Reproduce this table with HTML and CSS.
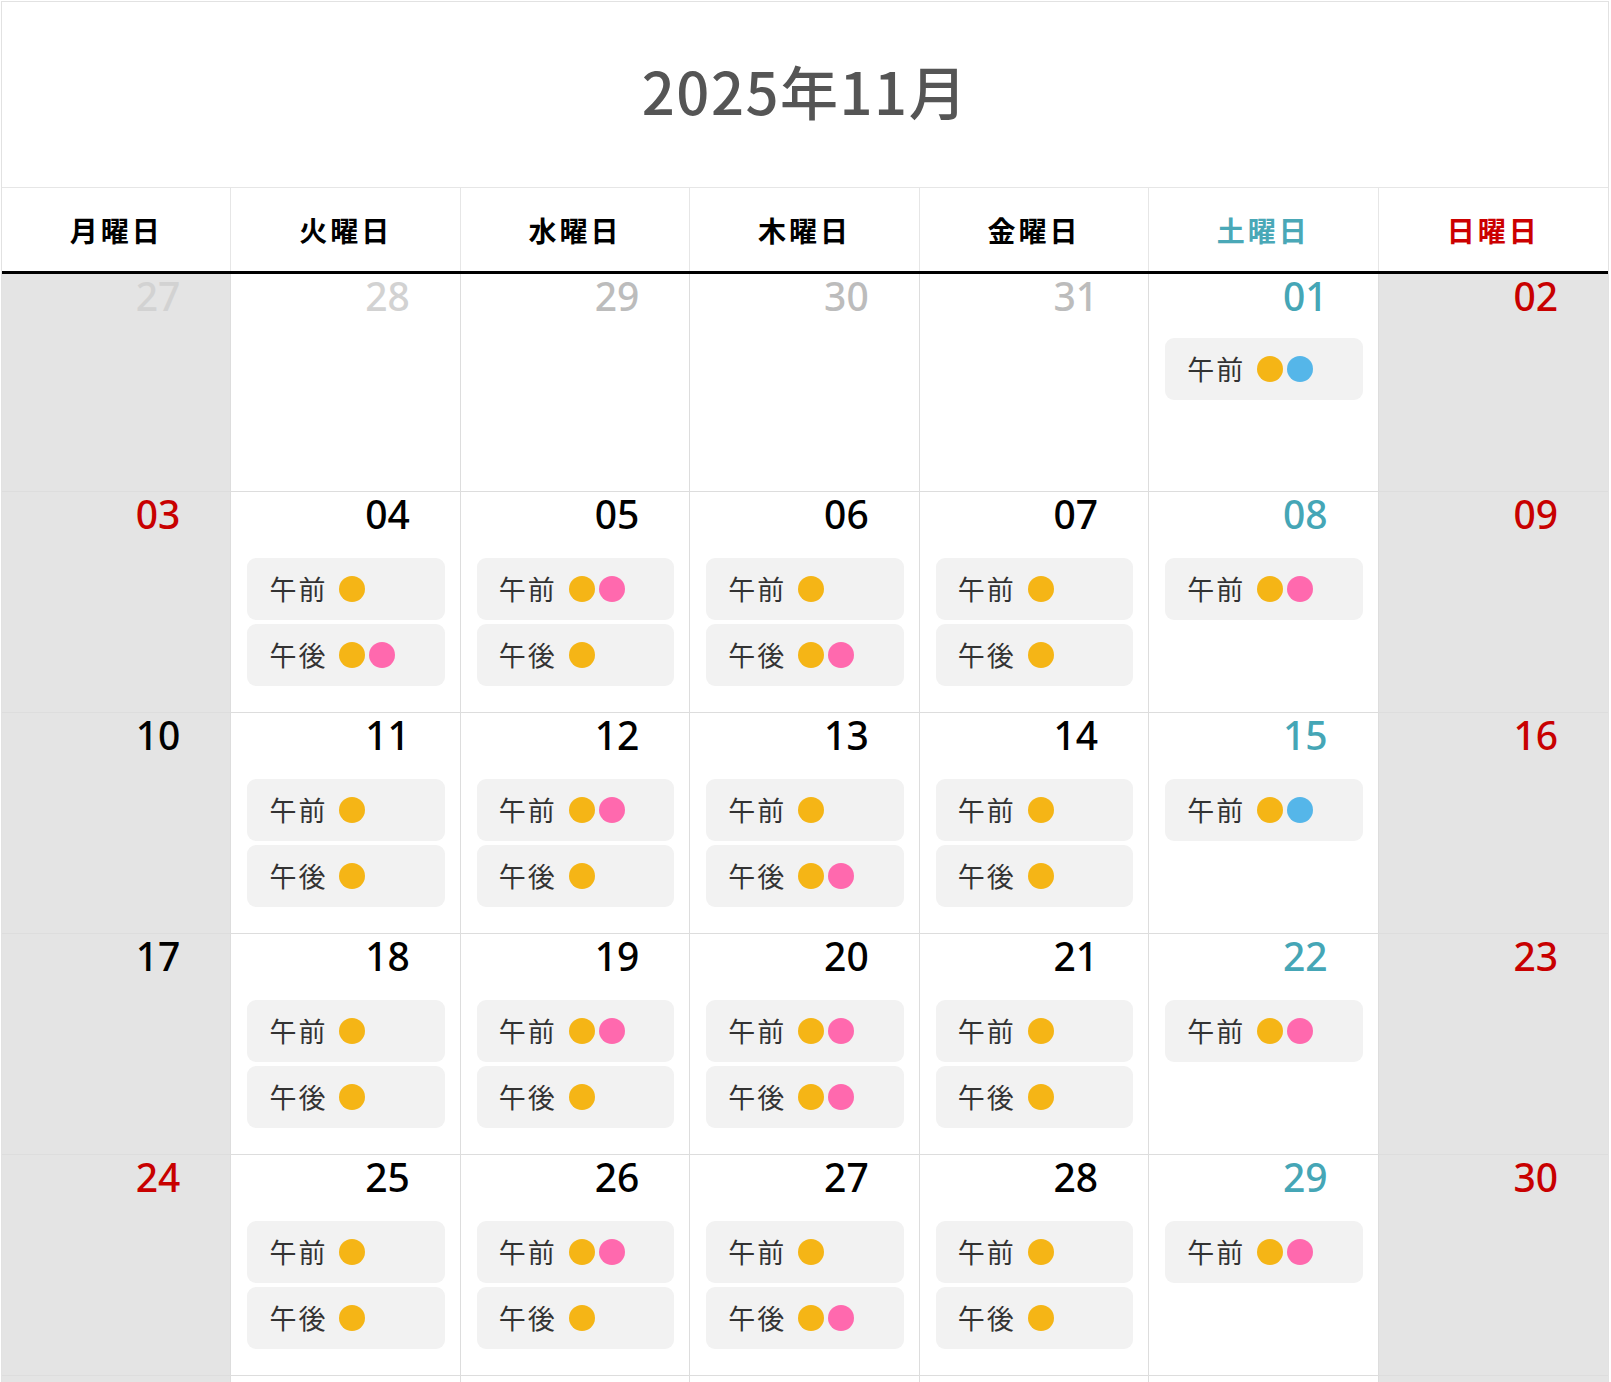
FILE: index.html
```html
<!DOCTYPE html>
<html lang="ja">
<head>
<meta charset="utf-8">
<title>2025年11月</title>
<link rel="stylesheet" href="styles.css">
</head>
<body>
<div class="calendar">
  <div class="title">2025年11月</div>
  <div class="weekdays">
    <div class="wd">月曜日</div>
    <div class="wd">火曜日</div>
    <div class="wd">水曜日</div>
    <div class="wd">木曜日</div>
    <div class="wd">金曜日</div>
    <div class="wd sat">土曜日</div>
    <div class="wd sun">日曜日</div>
  </div>
  <div class="days">
    <!-- row 1 -->
    <div class="day off"><div class="num faint">27</div></div>
    <div class="day"><div class="num faint">28</div></div>
    <div class="day"><div class="num dim">29</div></div>
    <div class="day"><div class="num dim">30</div></div>
    <div class="day"><div class="num dim">31</div></div>
    <div class="day"><div class="num sat">01</div>
      <div class="slot"><span class="lbl">午前</span><i class="dot y"></i><i class="dot b"></i></div>
    </div>
    <div class="day off"><div class="num sun">02</div></div>
    <!-- row 2 -->
    <div class="day off"><div class="num sun">03</div></div>
    <div class="day"><div class="num">04</div>
      <div class="slot"><span class="lbl">午前</span><i class="dot y"></i></div>
      <div class="slot"><span class="lbl">午後</span><i class="dot y"></i><i class="dot p"></i></div>
    </div>
    <div class="day"><div class="num">05</div>
      <div class="slot"><span class="lbl">午前</span><i class="dot y"></i><i class="dot p"></i></div>
      <div class="slot"><span class="lbl">午後</span><i class="dot y"></i></div>
    </div>
    <div class="day"><div class="num">06</div>
      <div class="slot"><span class="lbl">午前</span><i class="dot y"></i></div>
      <div class="slot"><span class="lbl">午後</span><i class="dot y"></i><i class="dot p"></i></div>
    </div>
    <div class="day"><div class="num">07</div>
      <div class="slot"><span class="lbl">午前</span><i class="dot y"></i></div>
      <div class="slot"><span class="lbl">午後</span><i class="dot y"></i></div>
    </div>
    <div class="day"><div class="num sat">08</div>
      <div class="slot"><span class="lbl">午前</span><i class="dot y"></i><i class="dot p"></i></div>
    </div>
    <div class="day off"><div class="num sun">09</div></div>
    <!-- row 3 -->
    <div class="day off"><div class="num">10</div></div>
    <div class="day"><div class="num">11</div>
      <div class="slot"><span class="lbl">午前</span><i class="dot y"></i></div>
      <div class="slot"><span class="lbl">午後</span><i class="dot y"></i></div>
    </div>
    <div class="day"><div class="num">12</div>
      <div class="slot"><span class="lbl">午前</span><i class="dot y"></i><i class="dot p"></i></div>
      <div class="slot"><span class="lbl">午後</span><i class="dot y"></i></div>
    </div>
    <div class="day"><div class="num">13</div>
      <div class="slot"><span class="lbl">午前</span><i class="dot y"></i></div>
      <div class="slot"><span class="lbl">午後</span><i class="dot y"></i><i class="dot p"></i></div>
    </div>
    <div class="day"><div class="num">14</div>
      <div class="slot"><span class="lbl">午前</span><i class="dot y"></i></div>
      <div class="slot"><span class="lbl">午後</span><i class="dot y"></i></div>
    </div>
    <div class="day"><div class="num sat">15</div>
      <div class="slot"><span class="lbl">午前</span><i class="dot y"></i><i class="dot b"></i></div>
    </div>
    <div class="day off"><div class="num sun">16</div></div>
    <!-- row 4 -->
    <div class="day off"><div class="num">17</div></div>
    <div class="day"><div class="num">18</div>
      <div class="slot"><span class="lbl">午前</span><i class="dot y"></i></div>
      <div class="slot"><span class="lbl">午後</span><i class="dot y"></i></div>
    </div>
    <div class="day"><div class="num">19</div>
      <div class="slot"><span class="lbl">午前</span><i class="dot y"></i><i class="dot p"></i></div>
      <div class="slot"><span class="lbl">午後</span><i class="dot y"></i></div>
    </div>
    <div class="day"><div class="num">20</div>
      <div class="slot"><span class="lbl">午前</span><i class="dot y"></i><i class="dot p"></i></div>
      <div class="slot"><span class="lbl">午後</span><i class="dot y"></i><i class="dot p"></i></div>
    </div>
    <div class="day"><div class="num">21</div>
      <div class="slot"><span class="lbl">午前</span><i class="dot y"></i></div>
      <div class="slot"><span class="lbl">午後</span><i class="dot y"></i></div>
    </div>
    <div class="day"><div class="num sat">22</div>
      <div class="slot"><span class="lbl">午前</span><i class="dot y"></i><i class="dot p"></i></div>
    </div>
    <div class="day off"><div class="num sun">23</div></div>
    <!-- row 5 -->
    <div class="day off"><div class="num sun">24</div></div>
    <div class="day"><div class="num">25</div>
      <div class="slot"><span class="lbl">午前</span><i class="dot y"></i></div>
      <div class="slot"><span class="lbl">午後</span><i class="dot y"></i></div>
    </div>
    <div class="day"><div class="num">26</div>
      <div class="slot"><span class="lbl">午前</span><i class="dot y"></i><i class="dot p"></i></div>
      <div class="slot"><span class="lbl">午後</span><i class="dot y"></i></div>
    </div>
    <div class="day"><div class="num">27</div>
      <div class="slot"><span class="lbl">午前</span><i class="dot y"></i></div>
      <div class="slot"><span class="lbl">午後</span><i class="dot y"></i><i class="dot p"></i></div>
    </div>
    <div class="day"><div class="num">28</div>
      <div class="slot"><span class="lbl">午前</span><i class="dot y"></i></div>
      <div class="slot"><span class="lbl">午後</span><i class="dot y"></i></div>
    </div>
    <div class="day"><div class="num sat">29</div>
      <div class="slot"><span class="lbl">午前</span><i class="dot y"></i><i class="dot p"></i></div>
    </div>
    <div class="day off"><div class="num sun">30</div></div>
    <!-- trailing row (cut off by the viewport) -->
    <div class="day off"></div>
    <div class="day"></div>
    <div class="day"></div>
    <div class="day"></div>
    <div class="day"></div>
    <div class="day"></div>
    <div class="day off"></div>
  </div>
</div>
</body>
</html>
```

FILE: styles.css
```css
* {
  box-sizing: border-box;
}

html, body {
  margin: 0;
  padding: 0;
  background: #ffffff;
}

body {
  font-family: "Noto Sans CJK JP", "Noto Sans", sans-serif;
  color: #000;
  padding: 1px 2px 0 1px;
}

.calendar {
  border: 1px solid #e2e2e2;
  border-bottom: none;
  width: 1608px;
}

.title {
  height: 186px;
  display: flex;
  align-items: center;
  justify-content: center;
  padding-bottom: 10px;
  font-size: 58px;
  font-weight: 500;
  letter-spacing: 1.5px;
  color: #555555;
  border-bottom: 1px solid #e6e6e6;
}

.weekdays {
  display: grid;
  grid-template-columns: repeat(7, 1fr);
  border-bottom: 3px solid #000;
}

.wd {
  height: 83px;
  display: flex;
  align-items: center;
  justify-content: center;
  font-size: 28px;
  font-weight: 600;
  letter-spacing: 3px;
  padding-bottom: 0;
  border-right: 1px solid #e6e6e6;
}

.wd:last-child {
  border-right: none;
}

.wd.sat { color: #4aa8b7; }
.wd.sun { color: #cc0000; }

.days {
  display: grid;
  grid-template-columns: repeat(7, 1fr);
}

.day {
  height: 221px;
  border-right: 1px solid #dddddd;
  border-bottom: 1px solid #dddddd;
  padding: 0 15px 0 16px;
  display: flex;
  flex-direction: column;
  gap: 4px;
}

.day:nth-child(-n+7) {
  height: 218px;
}

.day:nth-child(-n+7) .num {
  margin-bottom: 16px;
}

.day:nth-child(7n) {
  border-right: none;
}

.day.off {
  background: #e4e4e4;
}

.num {
  font-family: "Noto Sans", "Noto Sans CJK JP", sans-serif;
  font-weight: 500;
  text-align: right;
  font-size: 39px;
  line-height: 44px;
  height: 44px;
  padding-right: 35px;
  margin-top: 0;
  margin-bottom: 18px;
  color: #000;
}

.num.faint { color: #d2d2d2; }
.num.dim { color: #bcbcbc; }
.num.sat { color: #45a6b6; }
.num.sun { color: #c80000; }

.slot {
  height: 62px;
  border-radius: 9px;
  background: #f2f2f2;
  display: flex;
  align-items: center;
  padding-left: 22px;
  gap: 4px;
}

.lbl {
  font-size: 27px;
  letter-spacing: 2px;
  color: #333333;
  margin-right: 8px;
  line-height: 1;
  margin-top: -2px;
}

.dot {
  display: block;
  width: 26px;
  height: 26px;
  border-radius: 50%;
}

.dot.y { background: #f5b516; }
.dot.p { background: #ff69ae; }
.dot.b { background: #55b6e9; }
```
